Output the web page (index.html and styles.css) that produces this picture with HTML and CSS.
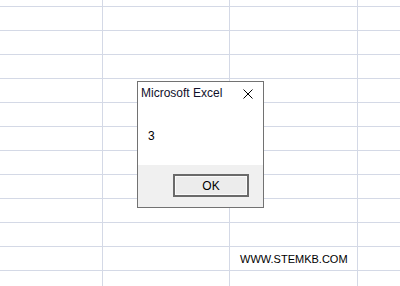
FILE: index.html
```html
<!DOCTYPE html>
<html>
<head>
<meta charset="utf-8">
<link rel="stylesheet" href="styles.css">
</head>
<body>
<div class="sheet">
  <div class="dialog">
    <div class="titlebar">
      <span class="title">Microsoft Excel</span>
      <svg class="close" width="10" height="10" viewBox="0 0 10 10"><path d="M0.5 0.5 L9.5 9.5 M9.5 0.5 L0.5 9.5" stroke="#000" stroke-width="1" fill="none"/></svg>
    </div>
    <div class="message">3</div>
    <div class="footer">
      <button class="ok">OK</button>
    </div>
  </div>
  <div class="watermark">WWW.STEMKB.COM</div>
</div>
</body>
</html>
```
FILE: styles.css
```css
html, body {
  margin: 0;
  padding: 0;
  background: #ffffff;
}
.sheet {
  position: relative;
  width: 400px;
  height: 286px;
  overflow: hidden;
  background-color: #ffffff;
  background-image:
    linear-gradient(to right, transparent 102px, #d4d9e6 102px, #d4d9e6 103px, transparent 103px, transparent 229px, #d4d9e6 229px, #d4d9e6 230px, transparent 230px, transparent 357px, #d4d9e6 357px, #d4d9e6 358px, transparent 358px),
    repeating-linear-gradient(to bottom, transparent 0, transparent 6px, #d4d9e6 6px, #d4d9e6 7px, transparent 7px, transparent 24px);
  font-family: "Liberation Sans", Arial, sans-serif;
}
.dialog {
  position: absolute;
  left: 137px;
  top: 81px;
  width: 125px;
  height: 125px;
  border: 1px solid #727272;
  background: #ffffff;
  display: flex;
  flex-direction: column;
}
.titlebar {
  height: 22px;
  display: flex;
  align-items: center;
  justify-content: space-between;
  padding-left: 3px;
  padding-right: 10px;
}
.title {
  font-size: 12px;
  line-height: 22px;
  color: #10102a;
}
.close {
  display: block;
  margin-top: 1px;
}
.message {
  height: 61px;
  box-sizing: border-box;
  padding: 24px 0 0 10px;
  font-size: 12px;
  line-height: 16px;
  color: #000;
}
.footer {
  flex: 1;
  background: #f0f0f0;
  display: flex;
  justify-content: flex-end;
  align-items: flex-start;
  padding: 9px 14px 0 0;
}
.ok {
  width: 76px;
  height: 23px;
  margin: 0;
  padding: 0;
  border: 2px solid #6a6a6a;
  box-shadow: inset 0 0 0 1px #fafafa;
  background: #ececec;
  font-family: "Liberation Sans", Arial, sans-serif;
  font-size: 12px;
  color: #000;
}
.watermark {
  position: absolute;
  left: 240px;
  top: 253px;
  font-size: 11px;
  line-height: 13px;
  color: #000;
}
```
